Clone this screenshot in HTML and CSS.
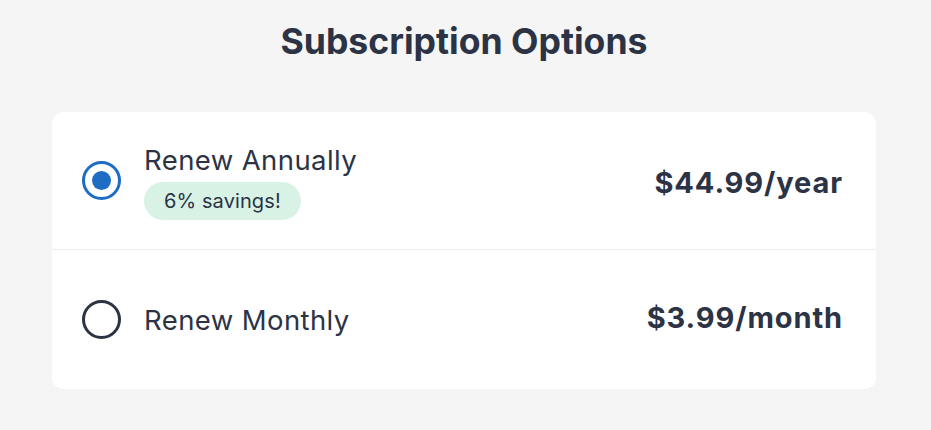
FILE: index.html
```html
<!DOCTYPE html>
<html>
<head>
<meta charset="utf-8">
<link rel="stylesheet" href="styles.css">
</head>
<body>
<main class="page">
  <h1 class="title">Subscription Options</h1>
  <section class="card">
    <div class="option">
      <span class="radio radio-on"><span class="dot"></span></span>
      <div class="label label-annual">
        <div class="name">Renew Annually</div>
        <span class="badge">6% savings!</span>
      </div>
      <div class="price price-annual">$44.99/year</div>
    </div>
    <div class="option option-last">
      <span class="radio"></span>
      <div class="label">
        <div class="name">Renew Monthly</div>
      </div>
      <div class="price price-monthly">$3.99/month</div>
    </div>
  </section>
</main>
</body>
</html>
```
FILE: styles.css
```css
* { box-sizing: border-box; }
html, body { margin: 0; padding: 0; }
body {
  background: #f5f5f5;
  font-family: "Inter", "Lato", sans-serif;
  color: #2b3345;
  width: 931px;
  height: 430px;
  overflow: hidden;
}
.page {
  padding: 20px 55px 0 52px;
}
.title {
  margin: 0;
  height: 92px;
  text-align: center;
  font-size: 35.6px;
  font-weight: 700;
  line-height: 44px;
  letter-spacing: 0;
}
.card {
  background: #fff;
  border-radius: 12px;
  width: 824px;
}
.option {
  display: flex;
  align-items: center;
  height: 138px;
  padding: 0 33px 0 30px;
  border-bottom: 1px solid #eeeeee;
}
.option-last {
  height: 139px;
  border-bottom: none;
}
.radio {
  width: 39px;
  height: 39px;
  border-radius: 50%;
  border: 3px solid #2b3345;
  display: flex;
  align-items: center;
  justify-content: center;
  flex: none;
}
.radio-on { border-color: #1e6cc4; }
.dot {
  width: 19px;
  height: 19px;
  border-radius: 50%;
  background: #1e6cc4;
}
.label {
  flex: 1;
  margin-left: 23px;
  display: flex;
  flex-direction: column;
  align-items: flex-start;
}
.label-annual { padding-top: 3px; }
.name {
  font-size: 27.5px;
  line-height: 32px;
  font-weight: 400;
  letter-spacing: 0.4px;
}
.badge {
  margin-top: 6px;
  background: #d8f3e6;
  border-radius: 19px;
  height: 38px;
  line-height: 38px;
  padding: 0 20px;
  font-size: 20px;
  letter-spacing: 0.1px;
}
.price {
  font-size: 29px;
  font-weight: 700;
  letter-spacing: 0.9px;
}
.price-annual { margin-top: 4px; }
.price-monthly { margin-bottom: 4px; }
```
